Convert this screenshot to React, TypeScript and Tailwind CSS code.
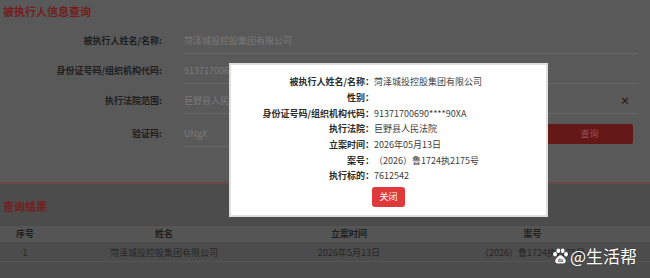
import React from "react";

const formRows = [
  { label: "被执行人姓名/名称:", value: "菏泽城投控股集团有限公司" },
  { label: "身份证号码/组织机构代码:", value: "91371700690****90XA" },
  { label: "执行法院范围:", value: "巨野县人民法院", clear: true },
];

const modalRows = [
  { label: "被执行人姓名/名称：", value: "菏泽城投控股集团有限公司" },
  { label: "性别：", value: "" },
  { label: "身份证号码/组织机构代码：", value: "91371700690****90XA" },
  { label: "执行法院：", value: "巨野县人民法院" },
  { label: "立案时间：", value: "2026年05月13日" },
  { label: "案号：", value: "（2026）鲁1724执2175号" },
  { label: "执行标的：", value: "7612542" },
];

function Paw() {
  return (
    <svg width="17" height="17" viewBox="0 0 17 17">
      <ellipse cx="3" cy="6.2" rx="1.9" ry="2.3" fill="#fff" />
      <ellipse cx="6.3" cy="2.8" rx="1.9" ry="2.3" fill="#fff" />
      <ellipse cx="10.7" cy="2.8" rx="1.9" ry="2.3" fill="#fff" />
      <ellipse cx="14" cy="6.2" rx="1.9" ry="2.3" fill="#fff" />
      <path d="M8.5 7.2 C6.5 7.2 5.6 9.4 4.3 10.6 C2.6 12.2 3 15.6 6 15.6 C7 15.6 7.6 15.2 8.5 15.2 C9.4 15.2 10 15.6 11 15.6 C14 15.6 14.4 12.2 12.7 10.6 C11.4 9.4 10.5 7.2 8.5 7.2 Z" fill="#fff" />
      <text x="8.5" y="14" textAnchor="middle" fontSize="4.6" fontWeight="700" fill="#4c4c4c" fontFamily="Liberation Sans, sans-serif">du</text>
    </svg>
  );
}

export default function App() {
  return (
    <div className="relative w-[650px] h-[278px] overflow-hidden bg-[#4c4c4c] font-['Noto_Sans_CJK_SC','Noto_Sans',sans-serif]">
      {/* form section */}
      <div className="h-[184px] bg-[#595959] border-b-2 border-[#6b4848]">
        <div className="pl-[3px] pt-[3px] h-[16px] text-[11px] leading-[16px] font-bold text-[#741d1d]">
          被执行人信息查询
        </div>
        <div className="mt-[10px] flex flex-col">
          {formRows.map((r) => (
            <div key={r.label} className="flex h-[30px] items-center">
              <div className="w-[162px] text-right text-[9px] font-bold text-[#1e1e1e]">{r.label}</div>
              <div className="ml-[22px] mr-[12px] flex h-[26px] flex-1 items-center justify-between border-b border-[#676767] text-[9px] text-[#7a7a7a]">
                <span>{r.value}</span>
                {r.clear && <span className="mr-[8px] text-[10px] font-bold text-[#2a1212]">×</span>}
              </div>
            </div>
          ))}
          <div className="mt-[3px] flex h-[30px] items-center">
            <div className="w-[162px] text-right text-[9px] font-bold text-[#1e1e1e]">验证码:</div>
            <div className="ml-[22px] flex h-[26px] w-[354px] items-center border-b border-[#676767] text-[9px] text-[#7a7a7a]">
              UNgX
            </div>
            <div className="ml-[8px] flex h-[20px] w-[87px] items-center justify-center rounded-[2px] bg-[#651818] text-[9px] text-[#9b5252]">
              查询
            </div>
          </div>
        </div>
      </div>

      {/* results section */}
      <div className="pt-[14px]">
        <div className="pl-[3px] h-[16px] text-[11px] leading-[16px] font-bold text-[#741d1d]">查询结果</div>
        <div className="mt-[12px] grid h-[16px] grid-cols-[50px_228px_142px_225px] items-center bg-[#555555] text-[9px] font-bold text-[#1e1e1e]">
          <div className="text-center">序号</div>
          <div className="text-center">姓名</div>
          <div className="text-center">立案时间</div>
          <div className="text-center">案号</div>
        </div>
        <div className="mt-[2px] grid h-[18px] grid-cols-[50px_228px_142px_225px] items-center border-b border-[#555555] text-[9px] text-[#262626]">
          <div className="text-center">1</div>
          <div className="text-center">菏泽城投控股集团有限公司</div>
          <div className="text-center">2026年5月13日</div>
          <div className="text-center">（2026）鲁1724执2175号</div>
        </div>
      </div>

      {/* modal */}
      <div className="absolute left-[229px] top-[63px] flex h-[154px] w-[319px] flex-col items-center border-2 border-[#dedede] bg-white pt-[9px]">
        <div className="flex w-full flex-col">
          {modalRows.map((r) => (
            <div key={r.label} className="flex h-[15.67px] items-center text-[9px] leading-[15px]">
              <div className="w-[143px] text-right font-bold text-[#2b2b2b]">{r.label}</div>
              <div className="text-[#3c3c3c]">{r.value}</div>
            </div>
          ))}
        </div>
        <div className="mt-[3px] flex h-[20px] w-[33px] items-center justify-center rounded-[3px] bg-[#e0393c] text-[9px] text-white">
          关闭
        </div>
      </div>

      {/* watermark */}
      <div className="absolute left-[552px] top-[246px] flex items-center">
        <Paw />
        <span className="ml-[1px] text-[17px] leading-[20px] text-white [text-shadow:0_0_2px_rgba(0,0,0,0.4)]">@生活帮</span>
      </div>
    </div>
  );
}
